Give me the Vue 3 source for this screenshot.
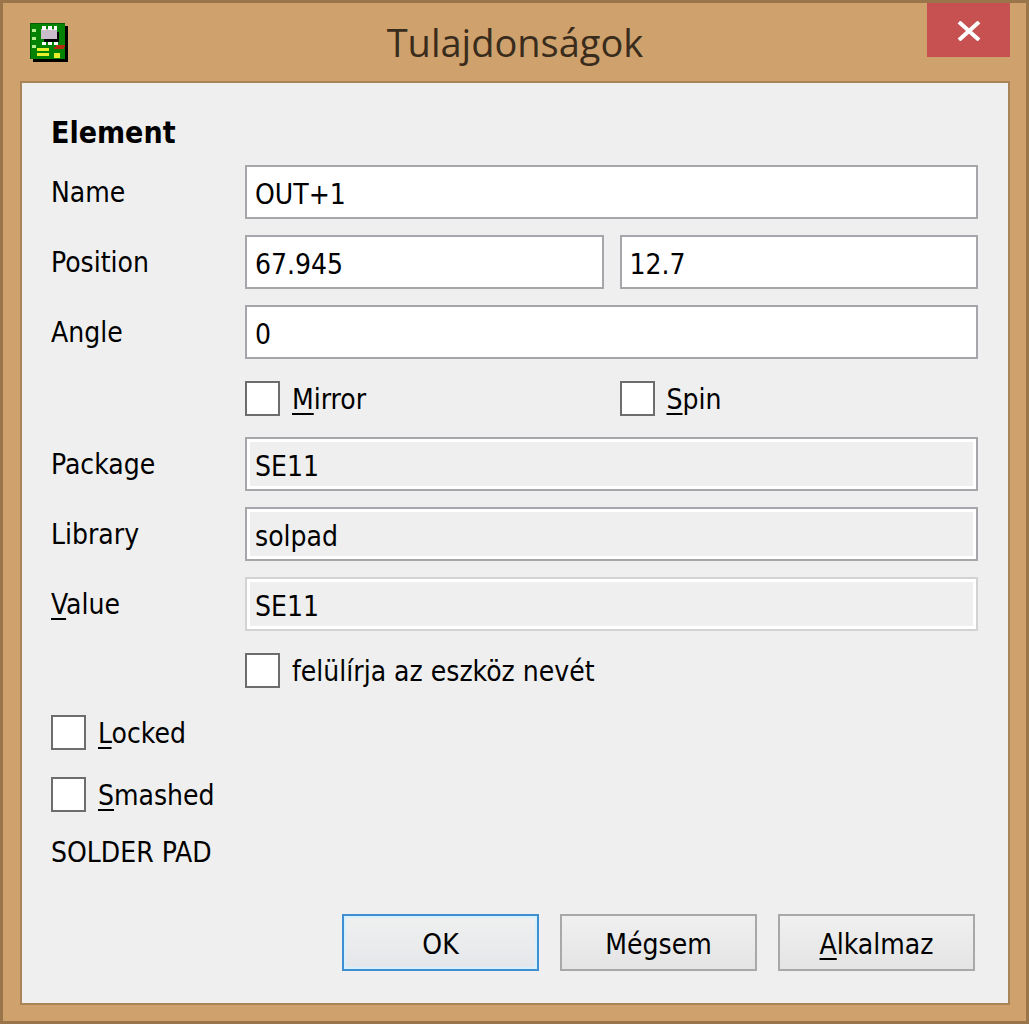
<script setup>
import { reactive } from 'vue'

const element = reactive({
  name: 'OUT+1',
  x: '67.945',
  y: '12.7',
  angle: '0',
  mirror: false,
  spin: false,
  package: 'SE11',
  library: 'solpad',
  value: 'SE11',
  overrideName: false,
  locked: false,
  smashed: false
})

defineEmits(['close', 'apply'])
</script>

<template>
  <div class="window">
    <header class="title-bar">
      <svg class="app-icon" viewBox="0 0 38 39" aria-hidden="true">
        <path fill="#000" d="M3 3h35v36H3z" />
        <path fill="#048204" d="M0 0h35v36H0z" />
        <path fill="#035c03" d="M0 0h35v1H1v35H0z" />
        <path fill="#000" d="M14 9h15v10H14z" />
        <path fill="#c9bccb" d="M11 6h16v10H11z" />
        <path fill="#fff" d="M12 3h4v4h-4zM18 3h4v4h-4zM24 3h3v4h-3zM12 19h4v3h-4zM18 19h4v3h-4zM24 19h4v3h-4z" />
        <path fill="#b4ee8c" d="M2 6h4v3H2zM2 14h4v3H2zM2 22h4v3H2z" />
        <path fill="#e8f02c" d="M7 25h12v3H7zM7 30h12v3H7zM24 30h6v5h-6z" />
        <path fill="#b52a10" d="M26 22h9v2h-9zM24 24h10v2H24z" />
      </svg>
      <h1 class="title">Tulajdonságok</h1>
      <button class="close-btn" type="button" aria-label="Close" @click="$emit('close')">
        <svg viewBox="0 0 24 20" aria-hidden="true">
          <path d="M2 1l20 18M22 1L2 19" fill="none" stroke="#fff" stroke-width="4" />
        </svg>
      </button>
    </header>

    <form class="client" @submit.prevent="$emit('apply')">
      <h2 class="heading">Element</h2>

      <div class="fields">
        <label class="label" for="name">Name</label>
        <input id="name" v-model="element.name" class="field wide" type="text" />

        <label class="label" for="pos-x">Position</label>
        <input id="pos-x" v-model="element.x" class="field" type="text" />
        <input v-model="element.y" class="field" type="text" aria-label="Position Y" />

        <label class="label" for="angle">Angle</label>
        <input id="angle" v-model="element.angle" class="field wide" type="text" />

        <label class="check second">
          <input v-model="element.mirror" type="checkbox" />
          <span><u>M</u>irror</span>
        </label>
        <label class="check">
          <input v-model="element.spin" type="checkbox" />
          <span><u>S</u>pin</span>
        </label>

        <label class="label" for="package">Package</label>
        <input id="package" v-model="element.package" class="field wide" type="text" readonly />

        <label class="label" for="library">Library</label>
        <input id="library" v-model="element.library" class="field wide" type="text" readonly />

        <label class="label" for="value"><span><u>V</u>alue</span></label>
        <input id="value" v-model="element.value" class="field wide" type="text" disabled />

        <label class="check second wide">
          <input v-model="element.overrideName" type="checkbox" />
          <span>felülírja az eszköz nevét</span>
        </label>

        <label class="check full">
          <input v-model="element.locked" type="checkbox" />
          <span><u>L</u>ocked</span>
        </label>
        <label class="check full">
          <input v-model="element.smashed" type="checkbox" />
          <span><u>S</u>mashed</span>
        </label>

        <p class="description full">SOLDER PAD</p>
      </div>

      <div class="actions">
        <button class="btn default" type="submit">OK</button>
        <button class="btn" type="button" @click="$emit('close')">Mégsem</button>
        <button class="btn" type="button" @click="$emit('apply')"><u>A</u>lkalmaz</button>
      </div>
    </form>
  </div>
</template>

<style>
body {
  margin: 0;
}
</style>

<style scoped>
.window {
  box-sizing: border-box;
  display: flex;
  flex-direction: column;
  min-height: 100vh;
  padding: 0 16px 16px 17px;
  border: 3px solid #9a7549;
  background: #cfa26d;
  color: #000;
  font-family: "DejaVu Sans Condensed", "DejaVu Sans", sans-serif;
  font-size: 28px;
  line-height: 36px;
}

.title-bar {
  display: grid;
  grid-template-columns: 83px 1fr 83px;
  align-items: center;
  height: 78px;
}

.app-icon {
  width: 38px;
  height: 39px;
  margin-left: 10px;
}

.title {
  margin: 0;
  color: #3a2c1c;
  font-family: "Open Sans", "Noto Sans", sans-serif;
  font-size: 38px;
  font-weight: 400;
  line-height: 78px;
  text-align: center;
}

.close-btn {
  display: flex;
  align-items: center;
  justify-content: center;
  align-self: start;
  height: 54px;
  padding: 2px 0 0;
  border: 0;
  background: #c75050;
}

.close-btn svg {
  width: 24px;
  height: 20px;
}

.client {
  display: flex;
  flex: 1;
  flex-direction: column;
  padding: 32px 30px 32px 29px;
  border: 2px solid #a98458;
  background: #efefef;
}

.heading {
  margin: 0 0 14px;
  font-size: 30px;
  line-height: 36px;
}

.fields {
  display: grid;
  grid-template-columns: 178px 1fr 1fr;
  gap: 16px;
}

.label {
  padding: 10px 0 8px;
}

.field {
  box-sizing: border-box;
  width: 100%;
  min-width: 0;
  height: 54px;
  margin: 0;
  padding: 4px 8px 0;
  border: 2px solid #a5a6aa;
  border-radius: 0;
  background: #fff;
  color: #000;
  font: inherit;
}

.field:read-only,
.field:disabled {
  background: #efefef;
  box-shadow: inset 0 0 0 3px #fff;
}

.field:disabled {
  border-color: #d3d3d3;
}

.wide {
  grid-column: 2 / span 2;
}

.second {
  grid-column-start: 2;
}

.full {
  grid-column: 1 / -1;
}

.check {
  display: flex;
  align-items: center;
  gap: 12px;
  height: 46px;
}

.check span {
  padding-top: 4px;
}

.check input {
  flex: none;
  box-sizing: border-box;
  width: 35px;
  height: 35px;
  margin: 0;
  border: 2px solid #6d6d6d;
  background: #fff;
  appearance: none;
}

.check input:checked {
  box-shadow: inset 0 0 0 6px #fff;
  background: #333;
}

u {
  text-decoration-thickness: 2px;
  text-underline-offset: 4px;
  text-decoration-skip-ink: none;
}

.description {
  margin: 0;
  padding-top: 2px;
}

.actions {
  display: flex;
  justify-content: flex-end;
  gap: 21px;
  margin-top: auto;
  padding: 36px 3px 0 0;
}

.btn {
  width: 197px;
  height: 57px;
  padding: 4px 0 0;
  border: 2px solid #a8a8a8;
  background: linear-gradient(#f0f0f0, #e4e4e4);
  color: #000;
  font: inherit;
}

.btn.default {
  border-color: #3f8fd0;
  background: linear-gradient(#f0f0f0, #e4e7ea);
  box-shadow: inset 0 0 0 2px #d5f1fd;
}
</style>
